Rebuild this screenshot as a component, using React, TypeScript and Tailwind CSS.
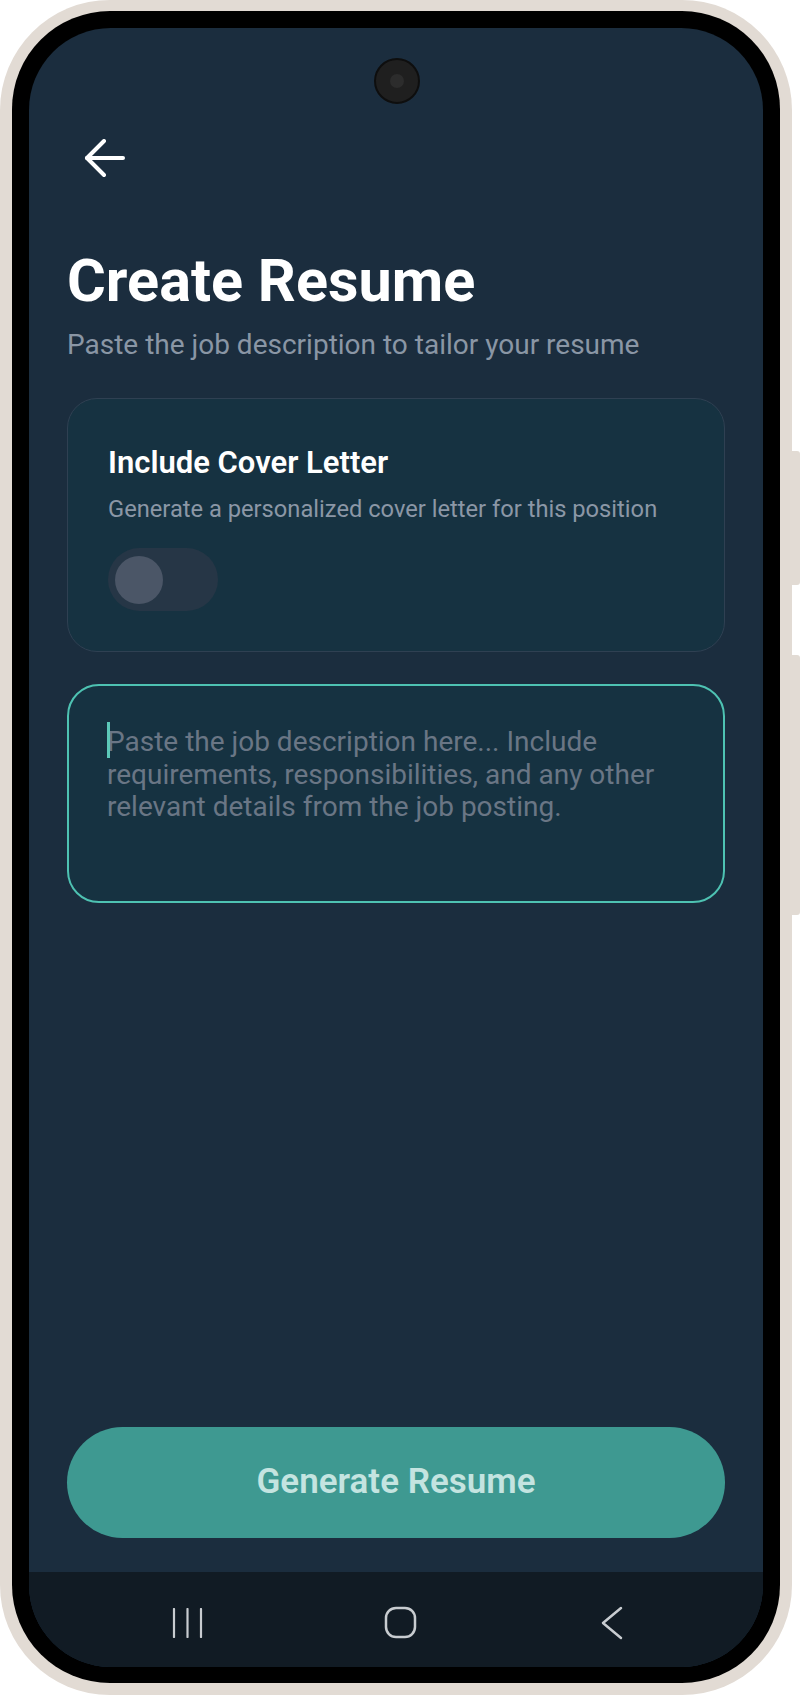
import { useState } from "react";

function BackArrow() {
  return (
    <svg width="42" height="40" viewBox="0 0 42 40" fill="none" stroke="#ffffff" strokeWidth="4" strokeLinecap="round" strokeLinejoin="round">
      <path d="M39 19H3" />
      <path d="M20 2L3 19l17 17" />
    </svg>
  );
}

function NavBar() {
  return (
    <div className="h-[95px] shrink-0 bg-[#111b24] flex items-center pt-[6px]">
      {/* recents */}
      <svg className="ml-[143px]" width="32" height="30" viewBox="0 0 32 30" fill="none" stroke="#c8ccd0" strokeWidth="2.2" strokeLinecap="round">
        <path d="M2 1v28" />
        <path d="M15.5 1v28" />
        <path d="M29 1v28" />
      </svg>
      {/* home */}
      <svg className="ml-[180px]" width="33" height="33" viewBox="0 0 33 33" fill="none" stroke="#c8ccd0" strokeWidth="2.5">
        <rect x="2" y="2" width="29" height="29" rx="10" />
      </svg>
      {/* back */}
      <svg className="ml-[183px]" width="24" height="34" viewBox="0 0 24 34" fill="none" stroke="#c8ccd0" strokeWidth="2.5" strokeLinecap="round" strokeLinejoin="round">
        <path d="M21 2L3 17l18 15" />
      </svg>
    </div>
  );
}

export default function App() {
  const [coverLetter, setCoverLetter] = useState(false);

  return (
    <div className="w-[800px] h-[1696px] bg-white relative font-['Roboto',sans-serif]">
      {/* side keys */}
      <div className="absolute left-[790px] top-[451px] w-[10px] h-[134px] rounded-r-[3px] bg-[#e2dbd4]" />
      <div className="absolute left-[790px] top-[655px] w-[10px] h-[260px] rounded-r-[3px] bg-[#e2dbd4]" />

      {/* phone body */}
      <div className="relative w-[792px] h-[1695px] rounded-[110px] bg-[#e2dbd4] pt-[11px] px-[12px] pb-[12px]">
        <div className="h-full rounded-[98px] bg-black pt-[17px] px-[17px] pb-[16px]">
          <div className="relative h-full rounded-[82px] overflow-hidden bg-[#1b2d3e] flex flex-col">
            {/* camera */}
            <div className="absolute left-[345px] top-[30px] w-[46px] h-[46px] rounded-full bg-[#1f1f1f] border-2 border-[#0e0e0e] flex items-center justify-center">
              <div className="w-[14px] h-[14px] rounded-full bg-[#2c2c2c]" />
            </div>

            <div className="flex-1 flex flex-col px-[38px] pt-[111px]">
              <button className="ml-[17px] w-[42px] h-[40px]">
                <BackArrow />
              </button>

              <h1 className="mt-[72px] text-[59.4px] leading-[60px] font-bold text-white">
                Create Resume
              </h1>
              <p className="mt-[17px] text-[28px] leading-[33px] text-[#8a96a5]">
                Paste the job description to tailor your resume
              </p>

              {/* cover letter card */}
              <div className="mt-[37px] rounded-[30px] border border-[#2f4052] bg-[#163241] px-[40px] pt-[46px] pb-[40px]">
                <h2 className="text-[31px] leading-[36px] font-semibold text-white">Include Cover Letter</h2>
                <p className="mt-[14px] text-[23.7px] leading-[28px] text-[#8b97a6]">
                  Generate a personalized cover letter for this position
                </p>
                <button
                  onClick={() => setCoverLetter(!coverLetter)}
                  className="mt-[25px] w-[110px] h-[63px] rounded-full bg-[#263646] flex items-center px-[7px]"
                >
                  <span className="w-[48px] h-[48px] rounded-full bg-[#4b5667]" />
                </button>
              </div>

              {/* job description */}
              <div className="relative mt-[32px] h-[219px] rounded-[32px] border-2 border-[#4ec2b2] bg-[#163241] pl-[38px] pr-[20px] pt-[40px]">
                <span className="absolute left-[38px] top-[36px] w-[3px] h-[36px] bg-[#5cc8b8]" />
                <div className="text-[28px] leading-[32.5px] text-[#6a7685] whitespace-nowrap">
                  <div>Paste the job description here... Include</div>
                  <div>requirements, responsibilities, and any other</div>
                  <div>relevant details from the job posting.</div>
                </div>
              </div>

              <div className="flex-1" />

              <button className="mb-[34px] h-[111px] rounded-full bg-[#3e9991] flex items-center justify-center">
                <span className="text-[35px] font-semibold text-[#c4e4e0]">Generate Resume</span>
              </button>
            </div>

            <NavBar />
          </div>
        </div>
      </div>
    </div>
  );
}
